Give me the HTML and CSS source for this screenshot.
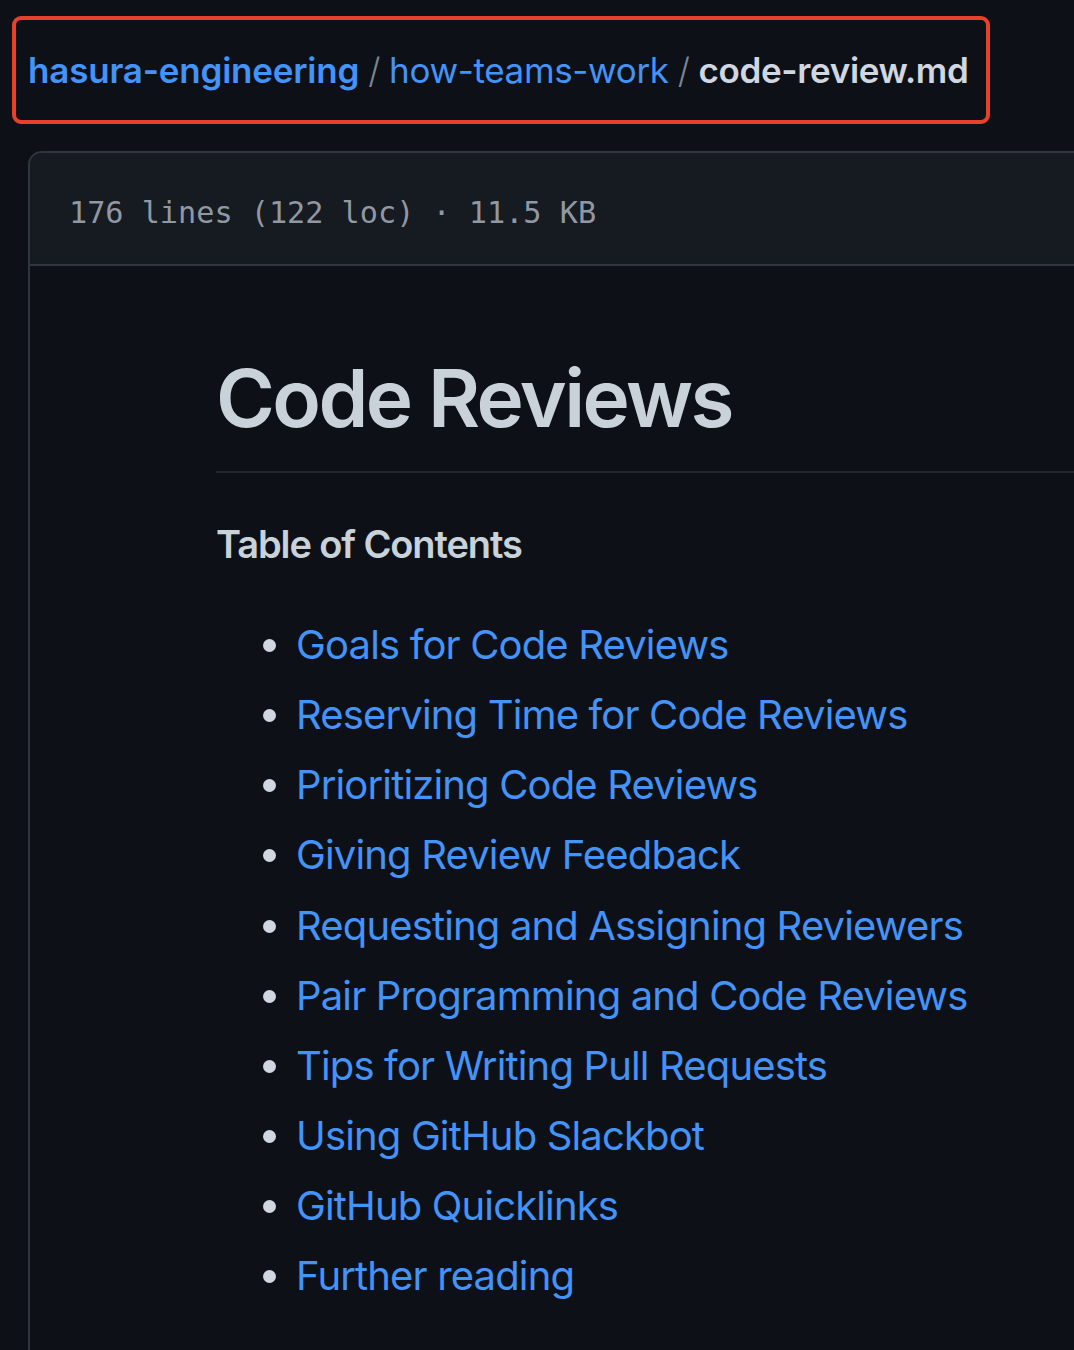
FILE: index.html
```html
<!DOCTYPE html>
<html lang="en">
<head>
<meta charset="utf-8">
<title>code-review.md</title>
<link rel="stylesheet" href="styles.css">
</head>
<body>
<div class="page">
  <nav class="crumbs">
    <a class="crumb crumb-org" href="#">hasura-engineering</a><span class="sep">/</span><a class="crumb crumb-repo" href="#">how-teams-work</a><span class="sep">/</span><strong class="crumb-file">code-review.md</strong>
  </nav>
  <section class="card">
    <header class="card-head">
      <span class="meta">176 lines (122 loc) · 11.5 KB</span>
    </header>
    <article class="md">
      <h1 class="md-h1">Code Reviews</h1>
      <h4 class="md-h4">Table of Contents</h4>
      <ul class="toc">
        <li><a href="#">Goals for Code Reviews</a></li>
        <li><a href="#">Reserving Time for Code Reviews</a></li>
        <li><a href="#">Prioritizing Code Reviews</a></li>
        <li><a href="#">Giving Review Feedback</a></li>
        <li><a href="#">Requesting and Assigning Reviewers</a></li>
        <li><a href="#">Pair Programming and Code Reviews</a></li>
        <li><a href="#">Tips for Writing Pull Requests</a></li>
        <li><a href="#">Using GitHub Slackbot</a></li>
        <li><a href="#">GitHub Quicklinks</a></li>
        <li><a href="#">Further reading</a></li>
      </ul>
    </article>
  </section>
</div>
</body>
</html>
```
FILE: styles.css
```css
html, body {
  margin: 0;
  padding: 0;
  background: #0d1117;
  height: 100%;
  overflow: hidden;
}
body {
  font-family: Inter, "Noto Sans", "Liberation Sans", sans-serif;
  color: #c9d1d9;
}
a { text-decoration: none; }

.page {
  display: flex;
  flex-direction: column;
  align-items: flex-start;
  padding: 16px 0 0 12px;
}

.crumbs {
  box-sizing: border-box;
  width: 978px;
  height: 108px;
  border: 4px solid #e8412b;
  border-radius: 9px;
  padding: 29px 0 0 12px;
  font-size: 35px;
  line-height: 1.25;
  font-weight: 600;
  letter-spacing: -0.35px;
  white-space: nowrap;
}
.crumb { color: #4493f8; }
.crumb-org { letter-spacing: -0.2px; }
.crumb-repo { font-weight: 400; }
.sep {
  color: #7d8590;
  font-weight: 300;
  margin: 0 9px;
}
.crumb-file { color: #d1d7e0; font-weight: 600; }

.card {
  margin: 27px 0 0 16px;
  width: 1100px;
  border: 2px solid #30363d;
  border-radius: 14px;
  min-height: 1300px;
}
.card-head {
  background: #161b22;
  border-bottom: 2px solid #30363d;
  border-radius: 12px 12px 0 0;
  padding: 37px 0 29px 39px;
}
.meta {
  font-family: "DejaVu Sans Mono", "Liberation Mono", monospace;
  font-size: 30.2px;
  line-height: 1.5;
  color: #9198a1;
  display: block;
}

.md {
  padding: 82px 0 0 186px;
}
.md-h1 {
  margin: 0;
  font-size: 80px;
  line-height: 1.25;
  font-weight: 600;
  letter-spacing: -2.6px;
  color: #c9d1d9;
  padding-bottom: 23px;
  border-bottom: 2px solid #21262d;
}
.md-h4 {
  margin: 48px 0 0;
  font-size: 38px;
  line-height: 1.25;
  font-weight: 600;
  letter-spacing: -1.1px;
  color: #c9d1d9;
}
.toc {
  margin: 46px 0 0;
  padding-left: 80px;
  font-size: 40px;
  line-height: 1.5;
  letter-spacing: -0.85px;
  color: #d1d7e0;
}
.toc li { margin-bottom: 10.2px; }
.toc a { color: #4493f8; }
```
